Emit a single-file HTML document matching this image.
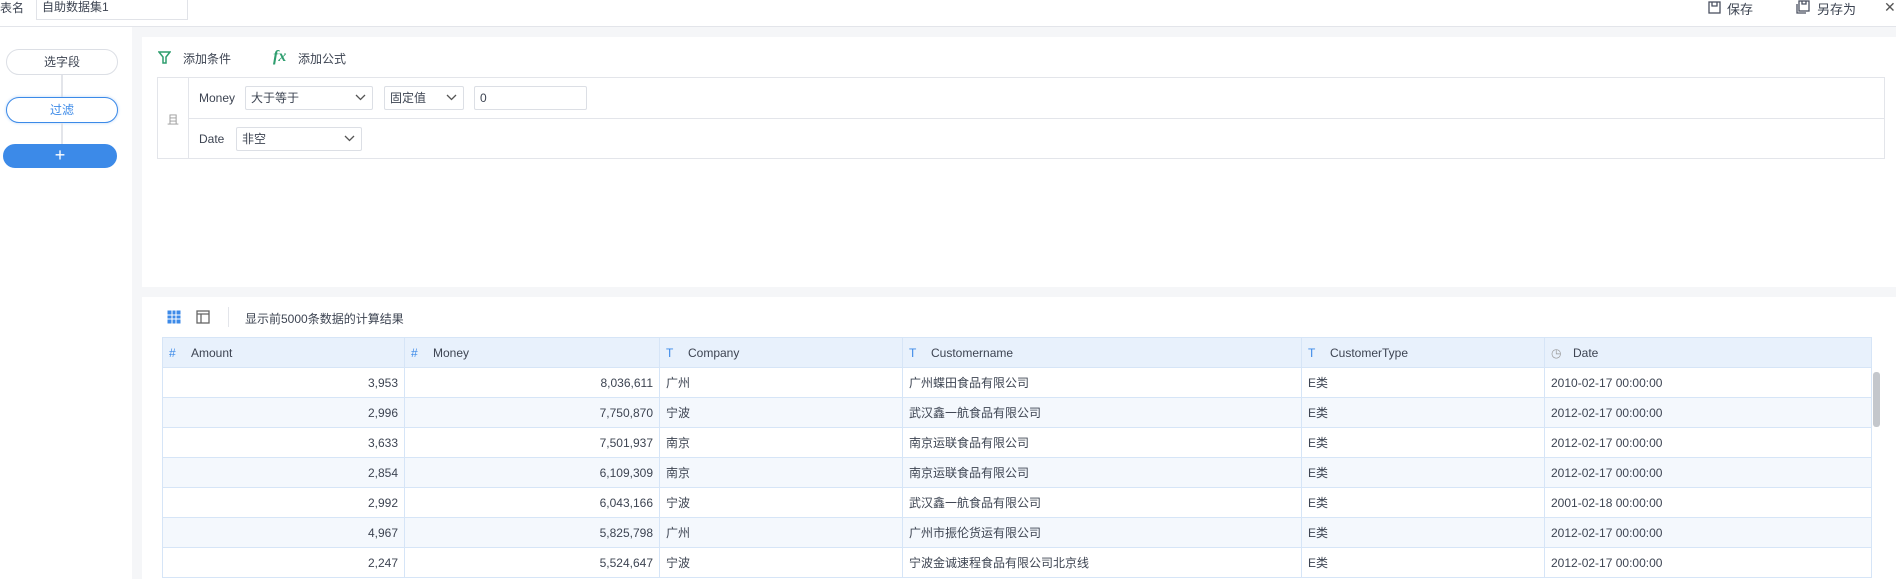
<!DOCTYPE html>
<html><head><meta charset="utf-8"><style>
*{box-sizing:border-box;margin:0;padding:0}
body{width:1896px;height:579px;overflow:hidden;background:#f5f6f8;font-family:"Liberation Sans","Noto Sans CJK SC",sans-serif;font-size:12px;color:#3d4452;position:relative}
.abs{position:absolute}
.top{left:0;top:0;width:1896px;height:27px;background:#fff;border-bottom:1px solid #e3e5ea}
.side{left:0;top:27px;width:132px;height:552px;background:#fff}
.pill{position:absolute;left:6px;width:112px;height:26px;border:1px solid #dcdfe5;border-radius:13px;text-align:center;line-height:24px;background:#fff}
.sel{position:absolute;height:24px;border:1px solid #dcdfe5;background:#fff;padding-left:5px;line-height:22px;border-radius:2px}
.sel svg{position:absolute;right:6px;top:7px}
table{border-collapse:collapse;table-layout:fixed}
td,th{border:1px solid #d6e5f7;height:30px;padding:0 6px;white-space:nowrap;overflow:hidden;font-weight:normal}
th{background:#e8f1fc;text-align:left;height:30px}
tr:nth-child(odd) td{background:#f4f8fd}
td.n{text-align:right}
.ic{color:#3c8ae8;display:inline-block;width:22px}
</style></head><body>
<div class="abs top">
 <span class="abs" style="left:0;top:-1px;font-size:12px">表名</span>
 <div class="abs" style="left:36px;top:-1px;width:152px;height:21px;border:1px solid #e1e3e8;padding-left:5px;line-height:15px">自助数据集1</div>
 <svg class="abs" style="left:1708px;top:1px" width="13" height="13" viewBox="0 0 13 13"><rect x="1" y="1" width="11" height="11" fill="none" stroke="#4a5060" stroke-width="1.3"/><path d="M4 1v4h5V1" fill="none" stroke="#4a5060" stroke-width="1.3"/></svg>
 <span class="abs" style="left:1727px;top:-1px;font-size:13px">保存</span>
 <svg class="abs" style="left:1796px;top:0" width="15" height="14" viewBox="0 0 15 14"><rect x="3" y="1" width="10" height="10" fill="none" stroke="#4a5060" stroke-width="1.3"/><path d="M6 1v3h4V1M1 4v9h9" fill="none" stroke="#4a5060" stroke-width="1.3"/></svg>
 <span class="abs" style="left:1817px;top:-1px;font-size:13px">另存为</span>
 <span class="abs" style="left:1884px;top:-1px;font-size:14px;color:#555">✕</span>
</div>
<div class="abs side">
 <div class="pill" style="top:22px">选字段</div>
 <div class="abs" style="left:61px;top:48px;width:2px;height:22px;background:#e3e5ea"></div>
 <div class="pill" style="top:70px;border-color:#3c8ae8;color:#3c8ae8;box-shadow:0 0 3px #bcd6f7">过滤</div>
 <div class="abs" style="left:61px;top:96px;width:2px;height:21px;background:#e3e5ea"></div>
 <div class="pill" style="top:117px;left:3px;width:114px;height:24px;background:#3c8ae8;border-color:#3c8ae8;color:#fff;font-size:18px;line-height:21px">+</div>
</div>
<div class="abs" style="left:142px;top:37px;width:1754px;height:250px;background:#fff">
 <svg class="abs" style="left:16px;top:14px" width="13" height="13" viewBox="0 0 13 13"><path d="M1 1h11L8 6v6H5V6z" fill="none" stroke="#2f9e6f" stroke-width="1.5"/></svg>
 <span class="abs" style="left:41px;top:13px">添加条件</span>
 <span class="abs" style="left:131px;top:11px;color:#2f9e6f;font-style:italic;font-weight:bold;font-family:'Liberation Serif',serif;font-size:16px">fx</span>
 <span class="abs" style="left:156px;top:13px">添加公式</span>
 <div class="abs" style="left:15px;top:40px;width:1728px;height:82px;border:1px solid #e3e5ea">
  <div class="abs" style="left:30px;top:0;width:1px;height:80px;background:#e3e5ea"></div>
  <span class="abs" style="left:9px;top:33px;color:#999">且</span>
  <div class="abs" style="left:31px;top:40px;width:1696px;height:1px;background:#e3e5ea"></div>
  <span class="abs" style="left:41px;top:13px">Money</span>
  <div class="sel" style="left:87px;top:8px;width:128px">大于等于<svg width="11" height="7"><path d="M1 1l4.5 4.5L10 1" fill="none" stroke="#555" stroke-width="1.3"/></svg></div>
  <div class="sel" style="left:226px;top:8px;width:80px">固定值<svg width="11" height="7"><path d="M1 1l4.5 4.5L10 1" fill="none" stroke="#555" stroke-width="1.3"/></svg></div>
  <div class="sel" style="left:316px;top:8px;width:113px">0</div>
  <span class="abs" style="left:41px;top:54px">Date</span>
  <div class="sel" style="left:78px;top:49px;width:126px">非空<svg width="11" height="7"><path d="M1 1l4.5 4.5L10 1" fill="none" stroke="#555" stroke-width="1.3"/></svg></div>
 </div>
</div>
<div class="abs" style="left:142px;top:297px;width:1754px;height:282px;background:#fff">
 <svg class="abs" style="left:25px;top:13px" width="14" height="14" viewBox="0 0 14 14"><rect x="0.5" y="0.5" width="13" height="13" fill="#3c8ae8"/><path d="M5 0v14M9 0v14M0 5h14M0 9h14" stroke="#fff" stroke-width="1"/></svg>
 <svg class="abs" style="left:54px;top:13px" width="14" height="14" viewBox="0 0 14 14"><rect x="1" y="1" width="12" height="12" fill="none" stroke="#666" stroke-width="1.3"/><path d="M1 4h12M5 4v9" stroke="#666" stroke-width="1.3"/></svg>
 <div class="abs" style="left:86px;top:10px;width:1px;height:20px;background:#e3e5ea"></div>
 <span class="abs" style="left:103px;top:13px">显示前5000条数据的计算结果</span>
</div>
<table class="abs" style="left:162px;top:337px;width:1709px">
<colgroup><col style="width:242px"><col style="width:255px"><col style="width:243px"><col style="width:399px"><col style="width:243px"><col style="width:327px"></colgroup>
<tr><th><span class="ic">#</span>Amount</th><th><span class="ic">#</span>Money</th><th><span class="ic">T</span>Company</th><th><span class="ic">T</span>Customername</th><th><span class="ic">T</span>CustomerType</th><th><span class="ic" style="color:#999">◷</span>Date</th></tr>
<tr><td class="n">3,953</td><td class="n">8,036,611</td><td>广州</td><td>广州蝶田食品有限公司</td><td>E类</td><td>2010-02-17 00:00:00</td></tr>
<tr><td class="n">2,996</td><td class="n">7,750,870</td><td>宁波</td><td>武汉鑫一航食品有限公司</td><td>E类</td><td>2012-02-17 00:00:00</td></tr>
<tr><td class="n">3,633</td><td class="n">7,501,937</td><td>南京</td><td>南京运联食品有限公司</td><td>E类</td><td>2012-02-17 00:00:00</td></tr>
<tr><td class="n">2,854</td><td class="n">6,109,309</td><td>南京</td><td>南京运联食品有限公司</td><td>E类</td><td>2012-02-17 00:00:00</td></tr>
<tr><td class="n">2,992</td><td class="n">6,043,166</td><td>宁波</td><td>武汉鑫一航食品有限公司</td><td>E类</td><td>2001-02-18 00:00:00</td></tr>
<tr><td class="n">4,967</td><td class="n">5,825,798</td><td>广州</td><td>广州市振伦货运有限公司</td><td>E类</td><td>2012-02-17 00:00:00</td></tr>
<tr><td class="n">2,247</td><td class="n">5,524,647</td><td>宁波</td><td>宁波金诚速程食品有限公司北京线</td><td>E类</td><td>2012-02-17 00:00:00</td></tr>
</table>
<div class="abs" style="left:1873px;top:372px;width:7px;height:55px;background:#c4c7cc;border-radius:3px"></div>
</body></html>
